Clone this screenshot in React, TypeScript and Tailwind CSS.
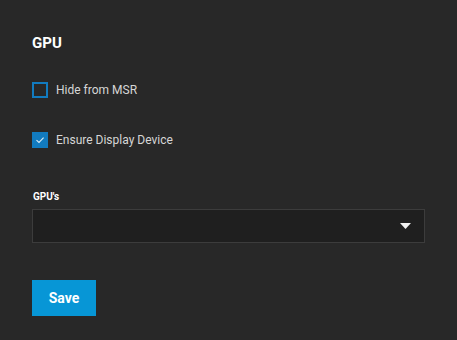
import React, { useState } from 'react';

const App: React.FC = () => {
  const [hideMsr, setHideMsr] = useState(false);
  const [ensureDisplay, setEnsureDisplay] = useState(true);

  const Checkbox = ({ checked, onChange, label }: { checked: boolean; onChange: () => void; label: string }) => (
    <label className="flex items-center h-4 cursor-pointer select-none" onClick={onChange}>
      <span
        className={`w-4 h-4 flex items-center justify-center border-2 border-[#127bbf] ${
          checked ? 'bg-[#127bbf]' : 'bg-transparent'
        }`}
      >
        {checked && (
          <svg width="10" height="10" viewBox="0 0 10 10" fill="none">
            <path d="M1.5 5.2 L4 7.5 L8.6 2.6" stroke="#d8ecf7" strokeWidth="1.1" />
          </svg>
        )}
      </span>
      <span className="ml-2 text-[12px] text-[#d6d6d6]">{label}</span>
    </label>
  );

  return (
    <div className="w-[457px] h-[340px] bg-[#282828] font-['Roboto',sans-serif] px-8 pt-[33px]">
      <h2 className="text-[15px] font-bold text-white leading-5">GPU</h2>

      <div className="mt-[29px]">
        <Checkbox checked={hideMsr} onChange={() => setHideMsr(!hideMsr)} label="Hide from MSR" />
      </div>
      <div className="mt-[34px]">
        <Checkbox checked={ensureDisplay} onChange={() => setEnsureDisplay(!ensureDisplay)} label="Ensure Display Device" />
      </div>

      <div className="mt-[43px] text-[10px] font-bold text-white leading-3 pl-px">GPU's</div>
      <div className="mt-[6px] w-[393px] h-[34px] bg-[#1f1f1f] border border-[#3c3c3c] flex items-center justify-end pr-[13px]">
        <svg width="11" height="6" viewBox="0 0 11 6">
          <path d="M0 0 H11 L5.5 6 Z" fill="#f0f0f0" />
        </svg>
      </div>

      <button className="mt-[37px] w-16 h-9 bg-[#0796d6] text-white text-[14px] font-bold">Save</button>
    </div>
  );
};

export default App;
